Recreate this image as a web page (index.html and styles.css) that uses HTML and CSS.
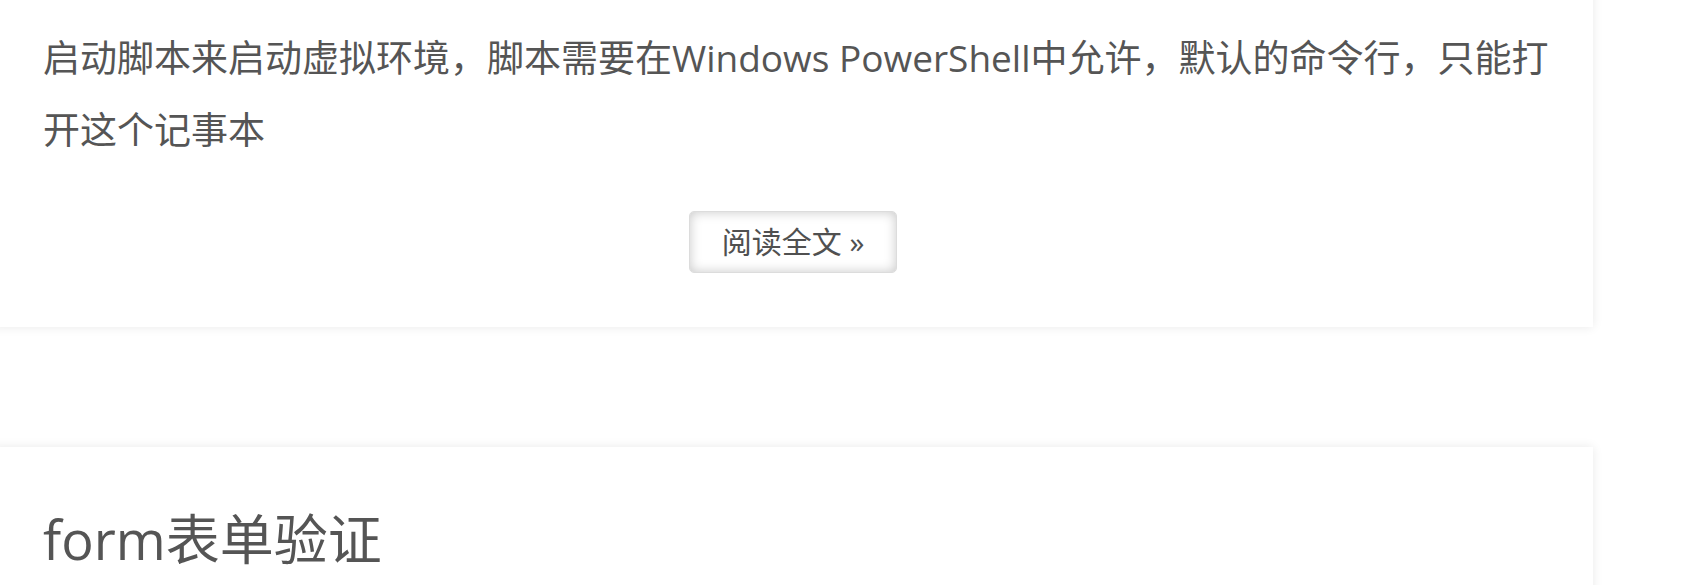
FILE: index.html
```html
<!DOCTYPE html>
<html lang="zh-CN">
<head>
<meta charset="utf-8">
<title>文章列表</title>
<link rel="stylesheet" href="styles.css">
</head>
<body>
<main class="posts">
  <article class="post">
    <p class="excerpt">启动脚本来启动虚拟环境，脚本需要在Windows PowerShell中允许，默认的命令行，只能打开这个记事本</p>
    <div class="more-wrap">
      <a class="more" href="#">阅读全文 »</a>
    </div>
  </article>
  <article class="post post-next">
    <h2 class="post-title">form表单验证</h2>
  </article>
</main>
</body>
</html>
```
FILE: styles.css
```css
html, body {
  margin: 0;
  padding: 0;
  background: #ffffff;
  overflow: hidden;
}

body {
  font-family: "Open Sans", "Noto Sans CJK SC", sans-serif;
  color: #555555;
}

.posts {
  width: 1600px;
  margin: -40px 0 0 -7px;
  display: flex;
  flex-direction: column;
  gap: 120px;
}

.post {
  background: #ffffff;
  box-shadow: 0 0 10px rgba(0, 0, 0, 0.09);
  padding: 62px 40px 54px 50px;
}

.excerpt {
  margin: 0 0 45px;
  font-size: 37px;
  line-height: 72px;
}

.more-wrap {
  text-align: center;
  padding-right: 10px;
}

.more {
  display: inline-block;
  padding: 8px 32px;
  font-size: 30px;
  line-height: 44px;
  color: #505050;
  text-decoration: none;
  background: #ffffff;
  border: 1px solid #dcdcdc;
  border-radius: 5px;
  box-shadow: inset 0 0 12px rgba(0, 0, 0, 0.22);
}

.post-next {
  padding-top: 60px;
  height: 300px;
}

.post-title {
  margin: 0;
  font-size: 54px;
  font-weight: normal;
  line-height: 1.2;
  color: #555555;
}
```
